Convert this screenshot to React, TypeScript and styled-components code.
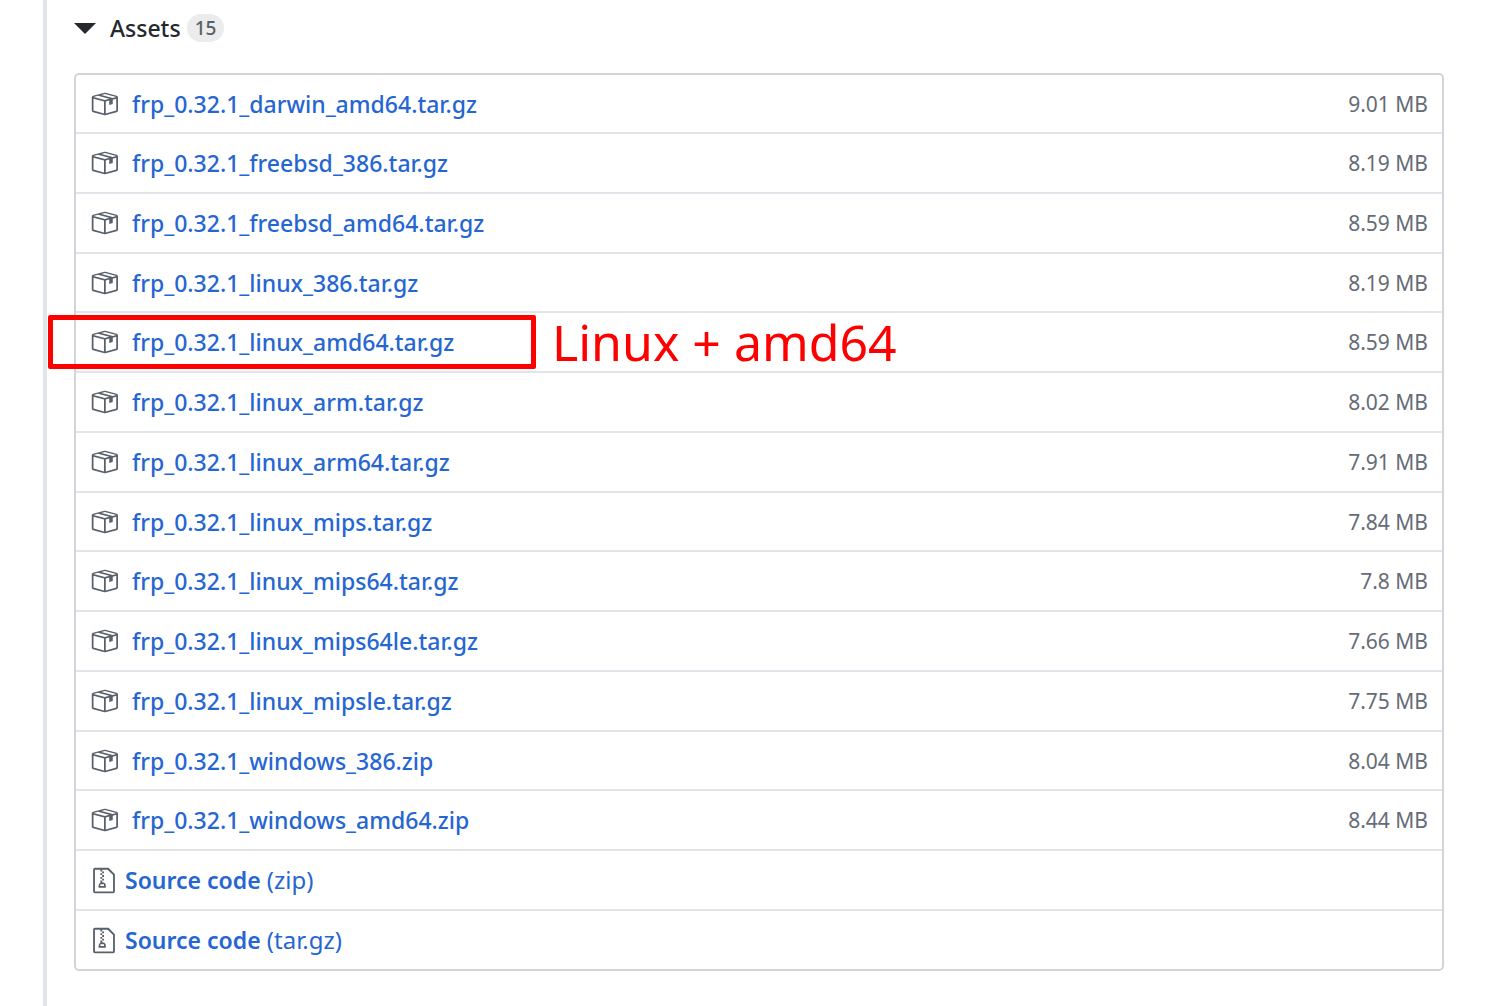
import React from "react";
import styled, { createGlobalStyle } from "styled-components";

const GlobalStyle = createGlobalStyle`
  *, *::before, *::after { box-sizing: border-box; }
  body {
    margin: 0;
    background: #fff;
    color: #24292e;
    font-family: "Noto Sans", "Open Sans", sans-serif;
    font-size: 23px;
    line-height: 36px;
  }
`;

const Release = styled.main`
  margin-left: 43px;
  padding: 10px 50px 36px 27px;
  border-left: 4px solid #e1e4e8;
`;

const Summary = styled.summary`
  display: flex;
  align-items: center;
  height: 36px;
  cursor: pointer;
  list-style: none;
  font-weight: 500;

  &::-webkit-details-marker { display: none; }
`;

const Caret = styled.span`
  margin-right: 14px;
  border: 11px solid transparent;
  border-top-color: #24292e;
  border-bottom-width: 0;
`;

const Counter = styled.span`
  margin-left: 6px;
  padding: 0 8px;
  border-radius: 14px;
  background: #ececed;
  color: #586069;
  font-size: 19px;
  line-height: 28px;
`;

const AssetList = styled.ul`
  margin: 27px 0 0;
  padding: 0;
  list-style: none;
  border: 2px solid #d1d5da;
  border-radius: 5px;
`;

const AssetRow = styled.li`
  position: relative;
  display: flex;
  align-items: center;
  justify-content: space-between;
  height: 60px;
  padding: 0 14px;
  border-top: 2px solid #e1e4e8;

  &:first-child { height: 57px; border-top: 0; }
  &:nth-child(4n) { height: 59px; }
`;

const AssetLink = styled.a<{ $gap: number }>`
  display: flex;
  align-items: center;
  gap: ${({ $gap }) => $gap}px;
  color: #2566d2;
  text-decoration: none;
  white-space: pre;
  svg { flex: none; fill: #586069; }
`;

const ZipIcon = styled.svg`
  width: 22px;
  height: 29px;
  margin-left: 3px;
`;

const BoxIcon = styled.svg`
  width: 28px;
  height: 28px;
`;

const Name = styled.span`
  font-weight: 500;
`;

const SourceName = styled.span`
  font-weight: 600;
`;

const SourceKind = styled.span`
  font-size: 24px;
`;

const Size = styled.small`
  color: #666c76;
  font-size: 21px;
`;

const Highlight = styled.div`
  position: absolute;
  top: 2px;
  left: -28px;
  width: 488px;
  height: 54px;
  border: 5px solid #f00;
  border-radius: 2px;
  pointer-events: none;
`;

const Note = styled.div`
  position: absolute;
  top: 1px;
  left: 476px;
  color: #f00;
  font-size: 50px;
  line-height: 56px;
  white-space: nowrap;
  pointer-events: none;
`;

interface Asset {
  name: string;
  size: string;
  note?: string;
}

const assets: Asset[] = [
  { name: "frp_0.32.1_darwin_amd64.tar.gz", size: "9.01 MB" },
  { name: "frp_0.32.1_freebsd_386.tar.gz", size: "8.19 MB" },
  { name: "frp_0.32.1_freebsd_amd64.tar.gz", size: "8.59 MB" },
  { name: "frp_0.32.1_linux_386.tar.gz", size: "8.19 MB" },
  { name: "frp_0.32.1_linux_amd64.tar.gz", size: "8.59 MB", note: "Linux + amd64" },
  { name: "frp_0.32.1_linux_arm.tar.gz", size: "8.02 MB" },
  { name: "frp_0.32.1_linux_arm64.tar.gz", size: "7.91 MB" },
  { name: "frp_0.32.1_linux_mips.tar.gz", size: "7.84 MB" },
  { name: "frp_0.32.1_linux_mips64.tar.gz", size: "7.8 MB" },
  { name: "frp_0.32.1_linux_mips64le.tar.gz", size: "7.66 MB" },
  { name: "frp_0.32.1_linux_mipsle.tar.gz", size: "7.75 MB" },
  { name: "frp_0.32.1_windows_386.zip", size: "8.04 MB" },
  { name: "frp_0.32.1_windows_amd64.zip", size: "8.44 MB" },
];

const sources = ["zip", "tar.gz"];

export default function App() {
  return (
    <>
      <GlobalStyle />
      <Release>
        <details open>
          <Summary>
            <Caret />
            Assets
            <Counter>15</Counter>
          </Summary>
          <AssetList>
            {assets.map((asset) => (
              <AssetRow key={asset.name}>
                <AssetLink href={`#${asset.name}`} $gap={14}>
                  <BoxIcon viewBox="0 0 16 16" aria-hidden="true">
                    <path
                      fillRule="evenodd"
                      d="M1 4.27v7.47c0 .45.3.84.75.97l6.5 1.73c.16.05.34.05.5 0l6.5-1.73c.45-.13.75-.52.75-.97V4.27c0-.45-.3-.84-.75-.97l-6.5-1.74a1.4 1.4 0 0 0-.5 0L1.75 3.3c-.45.13-.75.52-.75.97zm7 9.09l-6-1.59V5l6 1.61v6.75zM2 4l2.5-.67L11 5.06l-2.5.67L2 4zm13 7.77l-6 1.59V6.61l2-.55V8.5l2-.53V5.53L15 5v6.77zm-2-7.24L6.5 2.8l2-.53L15 4l-2 .53z"
                    />
                  </BoxIcon>
                  <Name>{asset.name}</Name>
                </AssetLink>
                <Size>{asset.size}</Size>
                {asset.note && (
                  <>
                    <Highlight />
                    <Note>{asset.note}</Note>
                  </>
                )}
              </AssetRow>
            ))}
            {sources.map((kind) => (
              <AssetRow key={kind}>
                <AssetLink href={`#source-${kind}`} $gap={10}>
                  <ZipIcon viewBox="0 0 12 16" aria-hidden="true">
                    <path
                      fillRule="evenodd"
                      d="M8.5 1H1a1 1 0 0 0-1 1v12a1 1 0 0 0 1 1h10a1 1 0 0 0 1-1V4.5L8.5 1zM11 14H1V2h3v1h1V2h3l3 3v9zM5 4V3h1v1H5zM4 4h1v1H4V4zm1 2V5h1v1H5zM4 6h1v1H4V6zm1 2V7h1v1H5zM4 9.28A2 2 0 0 0 3 11v1h4v-1a2 2 0 0 0-2-2V8H4v1.28zM6 10v1H4v-1h2z"
                    />
                  </ZipIcon>
                  <span>
                    <SourceName>Source code</SourceName>
                    <SourceKind> ({kind})</SourceKind>
                  </span>
                </AssetLink>
              </AssetRow>
            ))}
          </AssetList>
        </details>
      </Release>
    </>
  );
}
